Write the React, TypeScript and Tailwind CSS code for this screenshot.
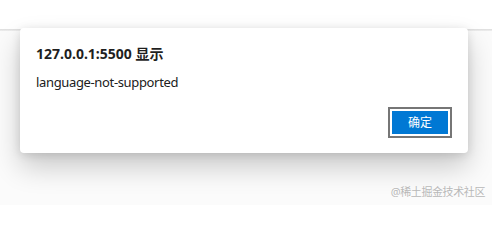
export default function App() {
  return (
    <div className="relative h-[205px] w-[492px] overflow-hidden bg-white font-['Noto_Sans','Noto_Sans_CJK_SC',sans-serif]">
      <div className="h-[29px] bg-white" />
      <div className="h-[2px] bg-gradient-to-b from-[#dcdcdc] to-[#efefef]" />
      <div className="h-[174px] bg-[#fbfbfb]" />

      <div className="absolute left-[20px] top-[28px] flex h-[125px] w-[448px] flex-col rounded-[4px] bg-white px-4 pb-[15px] pt-[16px] shadow-[0_14px_28px_rgba(0,0,0,0.2),0_2px_10px_rgba(0,0,0,0.12)]">
        <div className="text-[14px] font-bold leading-[20px] text-[#1f1f1f]">127.0.0.1:5500 显示</div>
        <div className="mt-[9px] text-[13px] leading-[18px] tracking-[-0.35px] text-[#202020]">language-not-supported</div>
        <div className="mt-auto flex justify-end">
          <div className="border-2 border-[#767676] p-[2px]">
            <button
              type="button"
              className="flex h-[23px] w-[56px] items-center justify-center bg-[#0078d4] text-[12px] leading-none text-white"
            >
              确定
            </button>
          </div>
        </div>
      </div>

      <div className="absolute bottom-[8px] right-[7px] text-[11px] leading-none tracking-[-0.4px] text-[#b8b8b8] [text-shadow:0_0_2px_#fff]">
        @稀土掘金技术社区
      </div>
    </div>
  );
}
